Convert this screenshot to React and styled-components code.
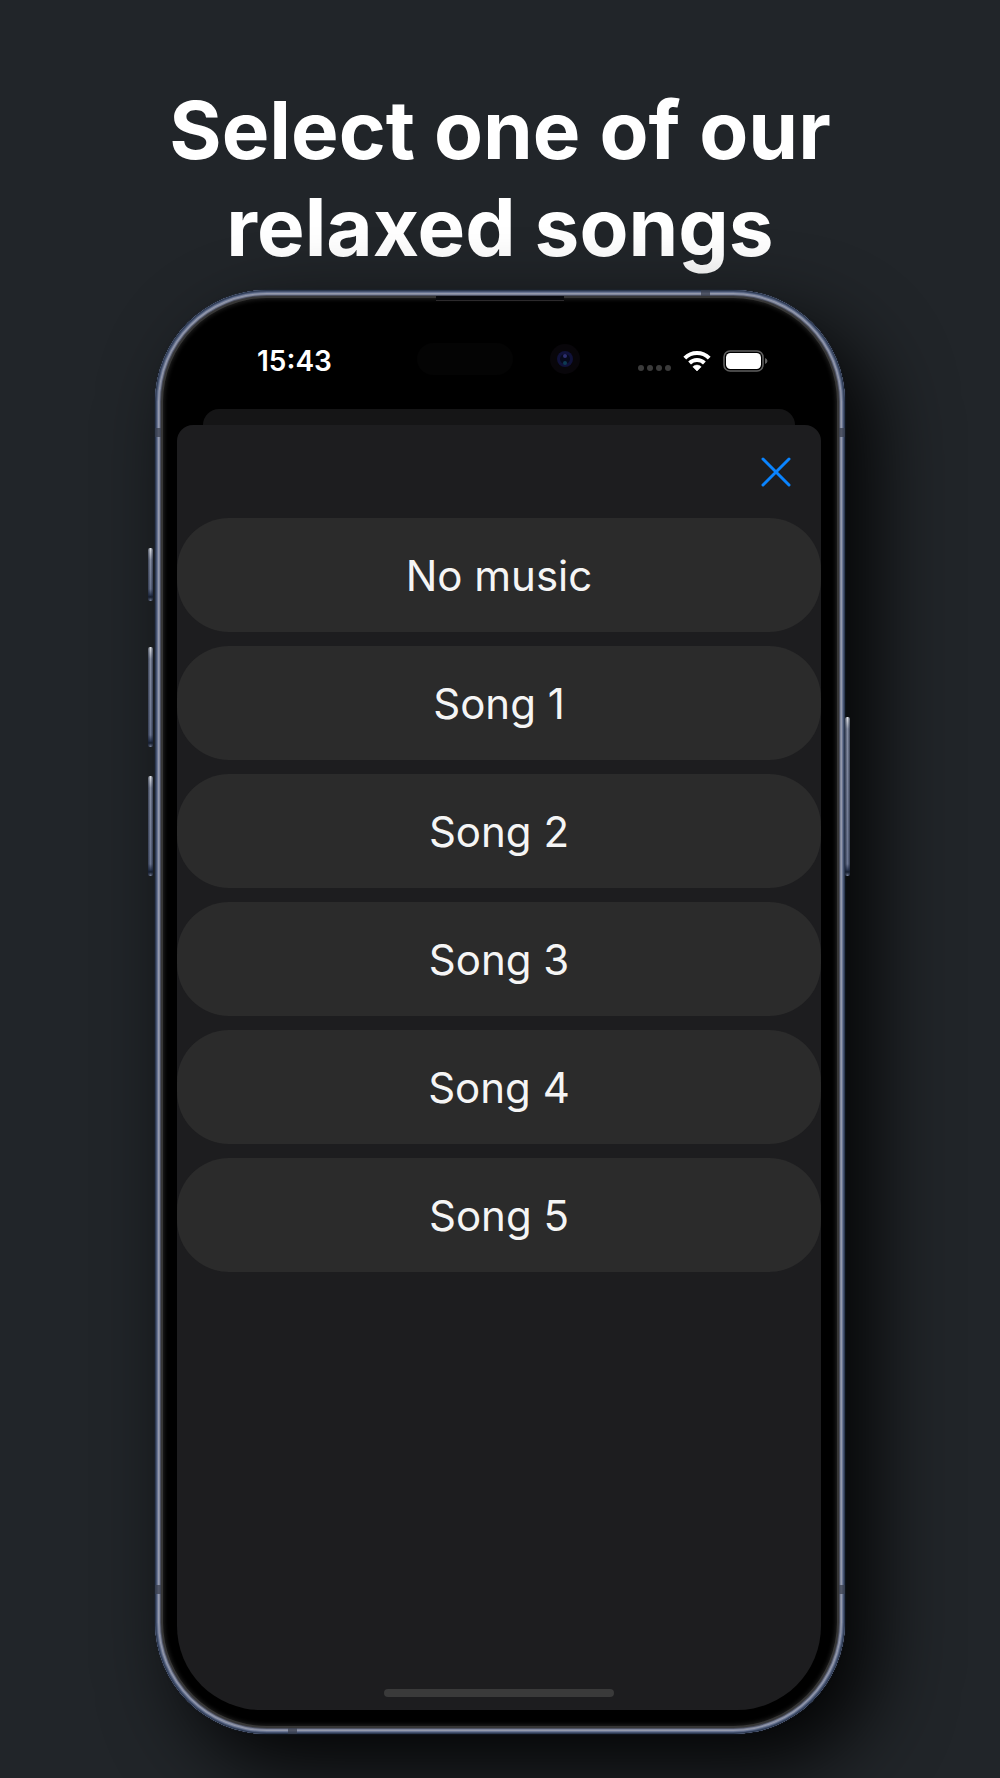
import React, { useState } from "react";
import styled, { createGlobalStyle, css } from "styled-components";

const GlobalStyle = createGlobalStyle`
  * {
    box-sizing: border-box;
  }
  body {
    margin: 0;
    background: #212529;
    font-family: Inter, "Liberation Sans", sans-serif;
  }
`;

const Page = styled.main`
  display: flex;
  flex-direction: column;
  align-items: center;
  min-height: 100vh;
  padding: 81px 24px 44px;
  overflow: hidden;
`;

const Title = styled.h1`
  max-width: 760px;
  margin: 0 0 15px;
  color: #fff;
  font-size: 80px;
  font-weight: 700;
  line-height: 97px;
  text-align: center;
`;

const Phone = styled.div`
  position: relative;
  display: flex;
  width: 100%;
  max-width: 690px;
  min-height: 1444px;
  padding: 12px 24px 24px 22px;
  border-radius: 112px;
  background: #000;
  box-shadow:
    inset 0 0 0 1px #2b3850,
    inset 0 0 0 2px #46536f,
    inset 0 0 0 3px #6a7694,
    inset 0 0 0 4px #9499ab,
    inset 0 0 0 5px #7f869c,
    inset 0 0 0 6px #4c5060,
    inset 0 0 0 8px #363636,
    inset 0 0 4px 9px #222,
    0 0 2px rgba(36, 48, 74, 0.8),
    28px 32px 80px rgba(0, 0, 0, 0.9);
`;

// physical buttons on the edges of the case
const SideKey = styled.span`
  position: absolute;
  top: ${(props) => props.$top}px;
  width: 5px;
  height: ${(props) => props.$height}px;
  border-radius: 2px;
  background:
    linear-gradient(
      90deg,
      rgba(24, 32, 50, 0.7),
      rgba(24, 32, 50, 0) 50%,
      rgba(24, 32, 50, 0.7)
    ),
    linear-gradient(
      #e0e2e6 0,
      #858da2 12px,
      #6b7590 calc(100% - 12px),
      #2b3650 calc(100% - 6px),
      #141c2b calc(100% - 4px),
      #7b859f 100%
    );
  ${(props) =>
    props.$right
      ? css`
          right: -5px;
        `
      : css`
          left: -7px;
        `}
`;

// thin antenna breaks in the metal band
const Antenna = styled.span`
  position: absolute;
  width: ${(props) => (props.$flat ? 9 : 6)}px;
  height: ${(props) => (props.$flat ? 6 : 9)}px;
  background: rgba(58, 63, 78, 0.75);
  ${(props) => props.$place}
`;

const Earpiece = styled.span`
  position: absolute;
  top: 6px;
  left: 50%;
  width: 128px;
  height: 5px;
  margin-left: -64px;
  border-bottom: 1px solid #2c2a2c;
  background: #08090c;
`;

const Screen = styled.div`
  display: flex;
  flex: 1;
  flex-direction: column;
  min-width: 0;
  border-radius: 84px;
  overflow: hidden;
`;

const StatusBar = styled.div`
  display: grid;
  grid-template-columns: 1fr 192px 1fr;
  align-items: center;
  height: 107px;
  padding: 6px 53px 0 80px;
`;

const Clock = styled.time`
  padding-top: 4px;
  color: #fff;
  font-size: 28px;
  font-weight: 600;
  line-height: 32px;
`;

const Island = styled.div`
  display: flex;
  align-items: center;
  gap: 37px;
`;

const Sensor = styled.span`
  width: 96px;
  height: 32px;
  border-radius: 16px;
  background: #040404;
`;

const StatusIcons = styled.div`
  display: flex;
  align-items: center;
  justify-content: flex-end;
  gap: 12px;
  padding-top: 4px;
`;

const BackSheet = styled.div`
  height: 16px;
  margin: 0 26px;
  border-radius: 16px 16px 0 0;
  background: #151516;
`;

const Sheet = styled.section`
  display: flex;
  flex: 1;
  flex-direction: column;
  border-radius: 16px 16px 0 0;
  background: #1d1d1f;
`;

const SheetHeader = styled.header`
  display: flex;
  align-items: center;
  justify-content: flex-end;
  height: 93px;
  padding-right: 25px;
`;

const CloseButton = styled.button`
  display: flex;
  align-items: center;
  justify-content: center;
  width: 40px;
  height: 40px;
  padding: 0;
  border: none;
  background: none;
  color: #0a84ff;
  cursor: pointer;
`;

const SongList = styled.ul`
  display: flex;
  flex-direction: column;
  gap: 14px;
  margin: 0;
  padding: 0;
  list-style: none;
`;

const SongButton = styled.button`
  display: block;
  width: 100%;
  height: 114px;
  padding: 2px 24px 0;
  border: none;
  border-radius: 52px;
  background: #2b2b2b;
  color: #f5f5f5;
  font-family: inherit;
  font-size: 42px;
  font-weight: 400;
  line-height: 56px;
  cursor: pointer;
`;

const HomeIndicator = styled.div`
  width: 230px;
  height: 8px;
  margin: auto auto 13px;
  border-radius: 4px;
  background: #3a3a3a;
`;

const songs = ["No music", "Song 1", "Song 2", "Song 3", "Song 4", "Song 5"];

const CameraIcon = () => (
  <svg width="30" height="30" viewBox="0 0 30 30" aria-hidden="true">
    <circle cx="15" cy="15" r="15" fill="#08060a" />
    <circle cx="15" cy="15" r="8" fill="#10123a" />
    <circle cx="15" cy="15" r="5" fill="#070a1c" />
    <circle cx="15" cy="12" r="2" fill="#2c2f70" />
    <circle cx="15" cy="19" r="2" fill="#0d3a52" />
  </svg>
);

const SignalIcon = () => (
  <svg width="33" height="22" viewBox="0 0 33 22" aria-hidden="true">
    <g fill="#3b3b3b">
      <circle cx="3" cy="18" r="3" />
      <circle cx="12" cy="18" r="3" />
      <circle cx="21" cy="18" r="3" />
      <circle cx="30" cy="18" r="3" />
    </g>
  </svg>
);

const WifiIcon = () => (
  <svg width="28" height="22" viewBox="0 0 28 22" aria-hidden="true">
    <g fill="none" stroke="#fff" strokeWidth="4">
      <path d="M1.8 8.2 A17.2 17.2 0 0 1 26.2 8.2" />
      <path d="M6.6 13 A10.6 10.6 0 0 1 21.4 13" />
    </g>
    <path
      d="M14 21 L9.8 16.8 A6 6 0 0 1 18.2 16.8 Z"
      fill="#fff"
      stroke="#fff"
      strokeWidth="0.6"
      strokeLinejoin="round"
    />
  </svg>
);

const BatteryIcon = () => (
  <svg width="45" height="22" viewBox="0 0 45 22" aria-hidden="true">
    <rect
      x="1"
      y="1"
      width="39"
      height="20"
      rx="6"
      fill="none"
      stroke="#606060"
      strokeWidth="1.6"
    />
    <rect x="3" y="3" width="35" height="16" rx="4.5" fill="#fff" />
    <path d="M42 8 Q44.5 9 44.5 11 Q44.5 13 42 14 Z" fill="#606060" />
  </svg>
);

const CloseIcon = () => (
  <svg width="30" height="30" viewBox="0 0 30 30" aria-hidden="true">
    <path
      d="M2 2 L28 28 M28 2 L2 28"
      stroke="currentColor"
      strokeWidth="3"
      strokeLinecap="round"
    />
  </svg>
);

const App = () => {
  const [selected, setSelected] = useState(null);

  return (
    <>
      <GlobalStyle />
      <Page>
        <Title>Select one of our relaxed songs</Title>
        <Phone>
          <SideKey $top={258} $height={53} />
          <SideKey $top={357} $height={100} />
          <SideKey $top={486} $height={100} />
          <SideKey $right $top={427} $height={159} />
          <Antenna $place="left: 0; top: 138px;" />
          <Antenna $place="right: 0; top: 138px;" />
          <Antenna $place="left: 0; bottom: 140px;" />
          <Antenna $place="right: 0; bottom: 140px;" />
          <Antenna $flat $place="right: 135px; top: 0;" />
          <Antenna $flat $place="left: 133px; bottom: 0;" />
          <Earpiece />
          <Screen>
            <StatusBar>
              <Clock>15:43</Clock>
              <Island>
                <Sensor />
                <CameraIcon />
              </Island>
              <StatusIcons>
                <SignalIcon />
                <WifiIcon />
                <BatteryIcon />
              </StatusIcons>
            </StatusBar>
            <BackSheet />
            <Sheet>
              <SheetHeader>
                <CloseButton aria-label="Close">
                  <CloseIcon />
                </CloseButton>
              </SheetHeader>
              <SongList>
                {songs.map((song) => (
                  <li key={song}>
                    <SongButton
                      aria-pressed={selected === song}
                      onClick={() => setSelected(song)}
                    >
                      {song}
                    </SongButton>
                  </li>
                ))}
              </SongList>
              <HomeIndicator />
            </Sheet>
          </Screen>
        </Phone>
      </Page>
    </>
  );
};

export default App;
